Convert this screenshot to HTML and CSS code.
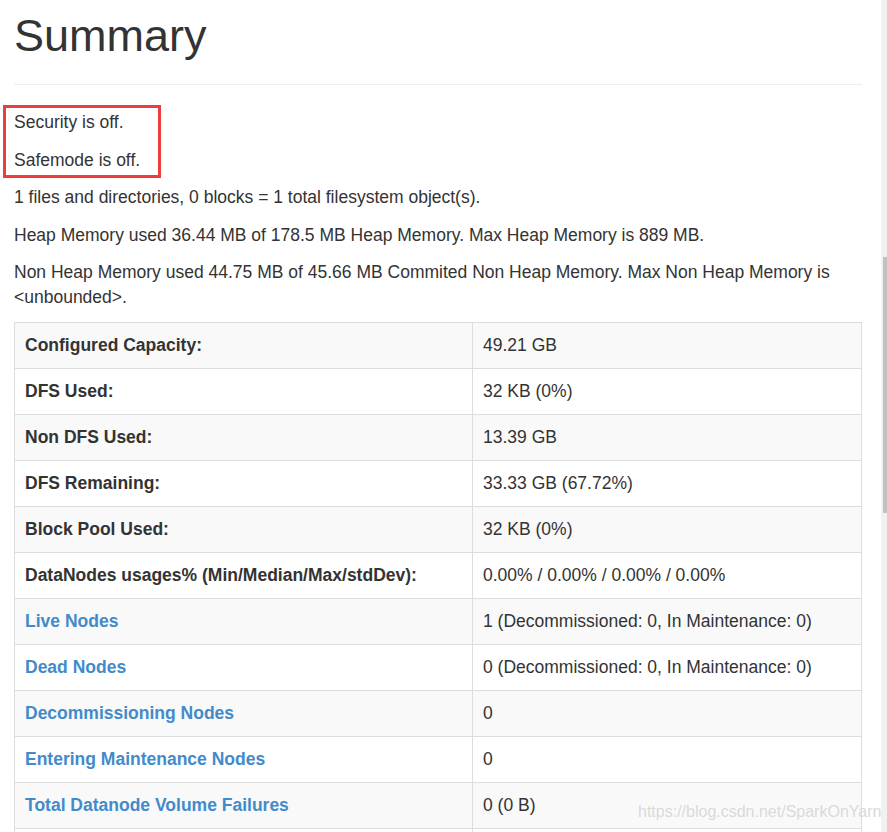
FILE: index.html
```html
<!DOCTYPE html>
<html>
<head>
<meta charset="utf-8">
<title>Summary</title>
<link rel="stylesheet" href="styles.css">
</head>
<body>
<div class="viewport">
  <div class="page">
    <div class="page-header"><h1>Summary</h1></div>
    <div class="annot">
      <p>Security is off.</p>
      <p>Safemode is off.</p>
    </div>
    <p>1 files and directories, 0 blocks = 1 total filesystem object(s).</p>
    <p>Heap Memory used 36.44 MB of 178.5 MB Heap Memory. Max Heap Memory is 889 MB.</p>
    <p class="last">Non Heap Memory used 44.75 MB of 45.66 MB Commited Non Heap Memory. Max Non Heap Memory is &lt;unbounded&gt;.</p>
    <table class="summary">
      <colgroup><col class="c1"><col class="c2"></colgroup>
      <tbody>
        <tr><th>Configured Capacity:</th><td>49.21 GB</td></tr>
        <tr><th>DFS Used:</th><td>32 KB (0%)</td></tr>
        <tr><th>Non DFS Used:</th><td>13.39 GB</td></tr>
        <tr><th>DFS Remaining:</th><td>33.33 GB (67.72%)</td></tr>
        <tr><th>Block Pool Used:</th><td>32 KB (0%)</td></tr>
        <tr><th>DataNodes usages% (Min/Median/Max/stdDev):</th><td>0.00% / 0.00% / 0.00% / 0.00%</td></tr>
        <tr><th><a href="#">Live Nodes</a></th><td>1 (Decommissioned: 0, In Maintenance: 0)</td></tr>
        <tr><th><a href="#">Dead Nodes</a></th><td>0 (Decommissioned: 0, In Maintenance: 0)</td></tr>
        <tr><th><a href="#">Decommissioning Nodes</a></th><td>0</td></tr>
        <tr><th><a href="#">Entering Maintenance Nodes</a></th><td>0</td></tr>
        <tr><th><a href="#">Total Datanode Volume Failures</a></th><td>0 (0 B)</td></tr>
        <tr class="empty"><th></th><td></td></tr>
      </tbody>
    </table>
  </div>
  <div class="scrollbar"><div class="thumb"></div></div>
</div>
<div class="watermark">https://blog.csdn.net/SparkOnYarn</div>
</body>
</html>
```
FILE: styles.css
```css
html, body {
  margin: 0;
  padding: 0;
  height: 832px;
  overflow: hidden;
  background: #fff;
}
body {
  font-family: "Liberation Sans", Arial, sans-serif;
  font-size: 17.5px;
  line-height: 25px;
  color: #333;
  position: relative;
}
.viewport {
  display: flex;
  width: 887px;
  height: 832px;
}
.page {
  flex: 1;
  padding: 0 19px 0 14px;
  min-width: 0;
}
.scrollbar {
  width: 6px;
  background: #f1f1f1;
  padding-top: 257px;
  box-sizing: border-box;
  display: flex;
  justify-content: flex-end;
}
.thumb {
  width: 4px;
  height: 256px;
  background: #c1c1c1;
}
.page-header {
  padding-top: 11px;
  padding-bottom: 23px;
  border-bottom: 1px solid #eee;
  margin-bottom: 25px;
}
h1 {
  margin: 0;
  font-size: 45px;
  line-height: 50px;
  font-weight: 500;
  color: #333;
}
p {
  margin: 0 0 12.5px;
}
p.last {
  margin-bottom: 12px;
}
.annot {
  border: 3px solid #f03c3c;
  width: 158px;
  box-sizing: border-box;
  margin: -5px 0 7px -11px;
  padding: 2px 0 2.5px 8px;
}
.annot p:last-child {
  margin-bottom: 0;
}
.summary {
  width: 100%;
  border-collapse: collapse;
  table-layout: fixed;
  border: 1px solid #ddd;
}
.summary .c1 {
  width: 458px;
}
.summary th,
.summary td {
  padding: 10px;
  border: 1px solid #ddd;
  text-align: left;
  vertical-align: top;
  line-height: 25px;
}
.summary th {
  font-weight: bold;
}
.summary tr:nth-child(odd) {
  background: #f9f9f9;
}
.summary tr.empty {
  height: 46px;
}
a {
  color: #428bca;
  text-decoration: none;
}
.watermark {
  position: absolute;
  left: 638px;
  top: 803px;
  font-size: 16px;
  line-height: 18px;
  color: #d9d9d9;
  white-space: nowrap;
}
```
